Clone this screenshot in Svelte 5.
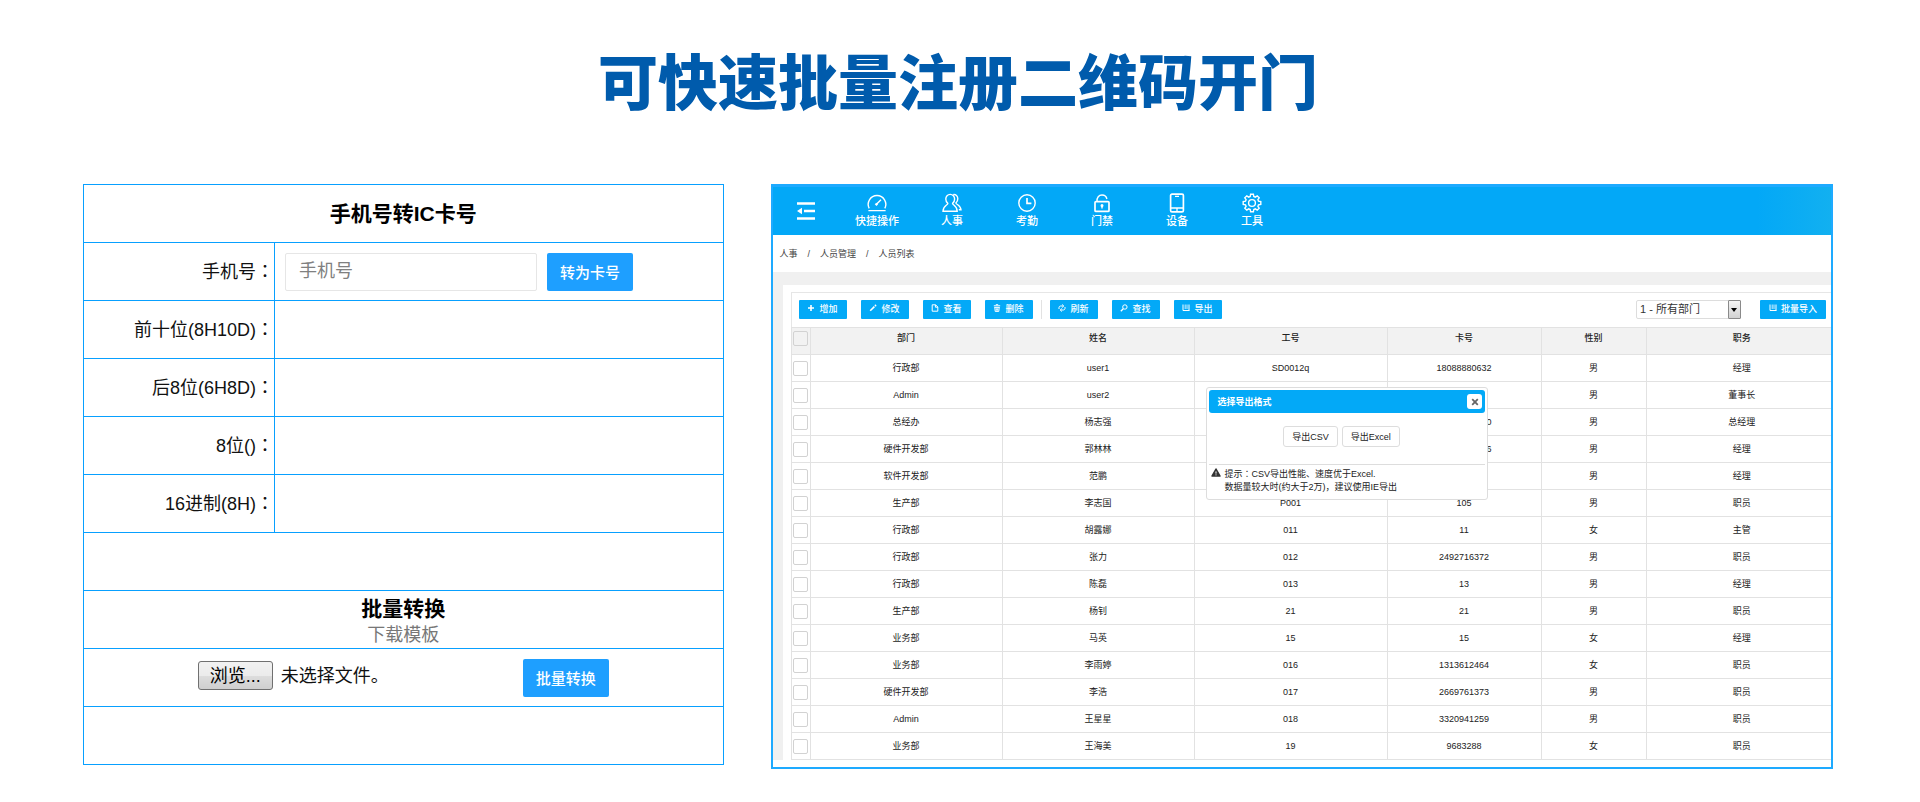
<script>
  const fields = [
    { label: '前十位(8H10D)', id: 'out-10d' },
    { label: '后8位(6H8D)', id: 'out-8d' },
    { label: '8位()', id: 'out-8' },
    { label: '16进制(8H)', id: 'out-hex' }
  ];
  const nav = [
    { name: '快捷操作', icon: 'gauge' },
    { name: '人事', icon: 'people' },
    { name: '考勤', icon: 'clock' },
    { name: '门禁', icon: 'lock' },
    { name: '设备', icon: 'device' },
    { name: '工具', icon: 'gear' }
  ];
  const edit = [
    { name: '增加', icon: 'plus' },
    { name: '修改', icon: 'pencil' },
    { name: '查看', icon: 'page' },
    { name: '删除', icon: 'trash' }
  ];
  const tools = [
    { name: '刷新', icon: 'refresh' },
    { name: '查找', icon: 'search' },
    { name: '导出', icon: 'book' }
  ];
  const columns = ['部门', '姓名', '工号', '卡号', '性别', '职务'];
  const rows = [
    ['行政部', 'user1', 'SD0012q', '18088880632', '男', '经理'],
    ['Admin', 'user2', '', '', '男', '董事长'],
    ['总经办', '杨志强', '', '18088880630', '男', '总经理'],
    ['硬件开发部', '郭林林', '', '18088880636', '男', '经理'],
    ['软件开发部', '范鹏', '', '', '男', '经理'],
    ['生产部', '李志国', 'P001', '105', '男', '职员'],
    ['行政部', '胡露娜', '011', '11', '女', '主管'],
    ['行政部', '张力', '012', '2492716372', '男', '职员'],
    ['行政部', '陈磊', '013', '13', '男', '经理'],
    ['生产部', '杨钊', '21', '21', '男', '职员'],
    ['业务部', '马英', '15', '15', '女', '经理'],
    ['业务部', '李雨婷', '016', '1313612464', '女', '职员'],
    ['硬件开发部', '李浩', '017', '2669761373', '男', '职员'],
    ['Admin', '王星星', '018', '3320941259', '男', '职员'],
    ['业务部', '王海美', '19', '9683288', '女', '职员']
  ];
  let picker;
</script>

{#snippet small(icon)}
  <svg class="mini" viewBox="0 0 8 8" aria-hidden="true">
    {#if icon === 'plus'}
      <path d="M4 1v6M1 4h6" stroke-width="1.6" />
    {:else if icon === 'pencil'}
      <path d="M1.2 6.8 5.4 2.6" stroke-width="1.6" /><path d="M6 2 7 1" stroke-width="1.8" />
    {:else if icon === 'page'}
      <path d="M1.2.8h3.4L6.8 3v4.2H1.2zM4.4.8v2.4h2.4" />
    {:else if icon === 'trash'}
      <path d="M.8 1.8h6.4M2.8.7h2.4M1.4 3.4h5.2M1.8 3.2l.4 4.2h3.6l.4-4.2M3.3 4.3v2.4M4.7 4.3v2.4" />
    {:else if icon === 'refresh'}
      <path d="M1 5V3.6C1 2.6 1.8 2 2.6 2h2.6M4.2.5 5.8 2 4.2 3.5M7 3v1.4C7 5.4 6.2 6 5.4 6H2.8M3.8 4.5 2.2 6l1.6 1.5" />
    {:else if icon === 'search'}
      <circle cx="4.9" cy="3" r="2.2" /><path d="M3.3 4.7.8 7.2" stroke-width="1.3" />
    {:else}
      <path d="M1 .5v6h6.500M7 .5v6" /><path d="M3.200 .5v4.500M5 .5v4.500" stroke-width=".8" />
    {/if}
  </svg>
{/snippet}

{#snippet large(icon)}
  <svg class="glyph" viewBox="0 0 20 20" aria-hidden="true">
    {#if icon === 'gauge'}
      <path d="M1.400 17.600h17.200M2.200 15.400A8.800 8.800 0 1 1 17.800 15.400M9.200 11.600l4.800-4.800" /><path d="M8.600 12.200l1.600-1.600" stroke-width="2.400" />
    {:else if icon === 'people'}
      <path d="M8.2 1.4c-2.6 0-4.4 1.9-4.4 4.6 0 1.9.8 3.4 2 4.4 0 1.700-4.600 2-4.800 7.800h14.200c-.2-5.800-4.600-6.100-4.600-7.800 1.200-1 2-2.500 2-4.400 0-2.700-1.800-4.600-4.400-4.600z" />
      <path d="M11.2 1.6c2.700-.4 4.600 1.500 4.600 4.200 0 1.800-.8 3.200-1.900 4.200.2 1.600 4.800 2 5.100 6.800h-2.200" />
    {:else if icon === 'clock'}
      <circle cx="10" cy="10" r="8.2" /><path d="M10 5v5.400h4.400" stroke-width="1.700" />
    {:else if icon === 'lock'}
      <rect x="3" y="8.600" width="14" height="9.800" rx="1" stroke-width="1.700" /><path d="M5 8.400C4.800 4.400 6.800 2 10 2c2.600 0 4.400 1.500 4.900 4M10 12v3.600" /><circle cx="10" cy="12.400" r=".8" />
    {:else if icon === 'device'}
      <rect x="3.600" y="1.200" width="12.800" height="17.600" rx="1.400" stroke-width="1.700" /><path d="M3.600 15h12.800M8 3.400h4M10 15v3.400" stroke-width="1.300" />
    {:else}
      <circle cx="10" cy="10" r="3.4" />
      <path d="M8.6 1.2h2.8l.4 2.3 1.5.6 1.9-1.3 2 2-1.3 1.9.6 1.5 2.3.4v2.8l-2.3.4-.6 1.5 1.3 1.9-2 2-1.9-1.3-1.5.6-.4 2.3H8.6l-.4-2.3-1.5-.6-1.9 1.3-2-2 1.3-1.9-.6-1.5-2.3-.4V8.600l2.300-.4.6-1.500-1.300-1.900 2-2 1.900 1.300 1.500-.6z" />
    {/if}
  </svg>
{/snippet}

<main>
  <h1>可快速批量注册二维码开门</h1>

  <div class="panels">
    <table class="convert">
      <colgroup><col class="c-label" /><col /></colgroup>
      <tbody>
        <tr><th colspan="2">手机号转IC卡号</th></tr>
        <tr>
          <td class="name"><label for="phone">手机号<span class="colon">：</span></label></td>
          <td class="entry">
            <div class="line">
              <input id="phone" class="phone" type="text" placeholder="手机号" />
              <button class="primary" type="button">转为卡号</button>
            </div>
          </td>
        </tr>
        {#each fields as f}
          <tr>
            <td class="name">{f.label}<span class="colon">：</span></td>
            <td><output id={f.id}></output></td>
          </tr>
        {/each}
        <tr><td colspan="2"></td></tr>
        <tr>
          <td colspan="2" class="batch">
            <strong>批量转换</strong>
            <a href="#template">下载模板</a>
          </td>
        </tr>
        <tr>
          <td colspan="2">
            <div class="upload">
              <div class="file">
                <button class="browse" type="button" onclick={() => picker.click()}>浏览...</button>
                <span>未选择文件。</span>
                <input bind:this={picker} type="file" hidden aria-label="浏览" />
              </div>
              <button class="primary" type="button">批量转换</button>
            </div>
          </td>
        </tr>
        <tr><td colspan="2"></td></tr>
      </tbody>
    </table>

    <section class="app">
      <header>
        <button class="fold" type="button" aria-label="菜单">
          <svg viewBox="0 0 18 18" aria-hidden="true">
            <path d="M0 1.500h18M7 9h11M0 16.500h18" stroke-width="2.400" />
            <path d="M0 9l5-3.200v6.400z" class="solid" />
          </svg>
        </button>
        <nav>
          {#each nav as n}
            <a href="#{n.icon}">{@render large(n.icon)}<span>{n.name}</span></a>
          {/each}
        </nav>
      </header>

      <div class="crumbs"><span>人事</span><i>/</i><span>人员管理</span><i>/</i><span>人员列表</span></div>

      <div class="body">
        <div class="card">
          <div class="toolbar">
            <div class="group">
              {#each edit as b}
                <button class="tool" type="button">{@render small(b.icon)}{b.name}</button>
              {/each}
            </div>
            <div class="group second">
              {#each tools as b}
                <button class="tool" type="button">{@render small(b.icon)}{b.name}</button>
              {/each}
            </div>
            <div class="select">
              <select aria-label="部门"><option>1 - 所有部门</option></select>
              <span class="drop"></span>
            </div>
            <button class="tool wide" type="button">{@render small('book')}批量导入</button>
          </div>

          <table class="list">
            <colgroup>
              <col style:width="19px" /><col style:width="192px" /><col style:width="192px" />
              <col style:width="193px" /><col style:width="154px" /><col style:width="105px" /><col style:width="185px" />
            </colgroup>
            <thead>
              <tr>
                <th class="tick"><input type="checkbox" aria-label="全选" /></th>
                {#each columns as c}<th>{c}</th>{/each}
              </tr>
            </thead>
            <tbody>
              {#each rows as r}
                <tr>
                  <td class="tick"><input type="checkbox" aria-label={r[1]} /></td>
                  {#each r as cell}<td>{cell}</td>{/each}
                </tr>
              {/each}
            </tbody>
          </table>
        </div>
      </div>

      <div class="dialog" role="dialog" aria-label="选择导出格式">
        <div class="bar">
          <strong>选择导出格式</strong>
          <button type="button" aria-label="关闭">
            <svg viewBox="0 0 8 8" aria-hidden="true"><path d="M1.200 1.200l5.600 5.600M6.800 1.200 1.200 6.800" stroke-width="1.800" /></svg>
          </button>
        </div>
        <div class="choices">
          <button type="button">导出CSV</button>
          <button type="button">导出Excel</button>
        </div>
        <div class="tip">
          <svg viewBox="0 0 10 9" aria-hidden="true">
            <path class="edge" d="M5 1 9 8H1z" /><path class="mark" d="M5 3.400v2.200M5 6.400v1" />
          </svg>
          <p>提示<span class="colon">：</span>CSV导出性能、速度优于Excel.<br />数据量较大时(约大于2万)，建议使用IE导出</p>
        </div>
      </div>
    </section>
  </div>
</main>

<style>
  :global(body) {
    margin: 0;
    background: #fff;
  }
  main,
  button,
  input,
  select {
    font-family: "Liberation Sans", "Noto Sans CJK SC", sans-serif;
  }
  main {
    color: #222;
    padding-bottom: 32px;
  }
  h1 {
    margin: 0;
    padding: 35px 4px 0 0;
    height: 149px;
    line-height: 88px;
    text-align: center;
    font-family: "Noto Sans CJK SC", sans-serif;
    font-size: 60px;
    font-weight: 900;
    color: #005bac;
  }
  .panels {
    display: grid;
    grid-template-columns: 642fr 1061fr;
    gap: 47px;
    align-items: start;
    padding: 0 87px 0 83px;
  }
  .colon {
    font-family: "Noto Sans CJK TC", sans-serif;
    line-height: 0;
  }
  svg {
    fill: none;
    stroke: currentColor;
  }
  table {
    width: 100%;
    table-layout: fixed;
    border-collapse: collapse;
  }
  button,
  select,
  input {
    cursor: pointer;
  }

  /* converter */
  .c-label {
    width: 191px;
  }
  .convert tr {
    height: 58px;
  }
  .convert th,
  .convert td {
    padding: 0;
    border: 1px solid #08a0ff;
    font-size: 18px;
    line-height: 24px;
    color: #111;
  }
  .convert th,
  .batch strong {
    font-size: 21px;
    font-weight: 700;
    color: #000;
  }
  .convert .name {
    text-align: right;
  }
  .line {
    display: flex;
    gap: 10px;
    padding-left: 10px;
  }
  .phone {
    box-sizing: border-box;
    width: 252px;
    height: 38px;
    padding: 0 13px;
    border: 1px solid #e6e6e6;
    border-radius: 2px;
    font-size: 18px;
    cursor: text;
  }
  .phone::placeholder {
    color: #808080;
  }
  .primary {
    width: 86px;
    height: 38px;
    padding: 0;
    border: 0;
    border-radius: 2px;
    background: #1e9fff;
    color: #fff;
    font-size: 15px;
    font-weight: 500;
  }
  .convert .batch {
    padding-top: 4px;
    text-align: center;
  }
  .batch strong,
  .batch a {
    display: block;
    line-height: 26px;
  }
  .batch a {
    color: #777;
    text-decoration: none;
  }
  .upload {
    display: flex;
    justify-content: center;
    align-items: center;
    gap: 134px;
  }
  .file {
    display: flex;
    align-items: center;
    gap: 8px;
    padding-bottom: 4px;
  }
  .browse {
    height: 29px;
    width: 75px;
    padding: 0;
    border: 1px solid #707070;
    border-radius: 3px;
    background: linear-gradient(#f2f2f2 0%, #ebebeb 50%, #dddddd 51%, #cfcfcf 100%);
    font-size: 18px;
    line-height: 24px;
    color: #000;
  }

  /* management window */
  .app {
    position: relative;
    border: 2px solid #1eaaff;
    border-top-width: 3px;
    font-size: 9px;
    color: #222;
  }
  header {
    display: flex;
    align-items: center;
    height: 48px;
    padding-left: 24px;
    background: linear-gradient(90deg, #03a8f7 93%, #12b0f0 100%);
    color: #fff;
  }
  .fold {
    display: flex;
    padding: 0;
    border: 0;
    background: none;
    color: #fff;
  }
  .fold svg {
    width: 18px;
    height: 18px;
  }
  .solid {
    fill: currentColor;
    stroke: none;
  }
  nav {
    display: flex;
    padding-left: 25px;
  }
  nav a {
    display: flex;
    flex-direction: column;
    align-items: center;
    width: 75px;
    font-size: 11px;
    font-weight: 500;
    line-height: 16px;
    color: #fff;
    text-decoration: none;
  }
  .glyph {
    width: 20px;
    height: 20px;
    stroke-width: 1.4;
  }
  .crumbs {
    display: flex;
    gap: 10px;
    align-items: center;
    height: 37px;
    padding-left: 7px;
    color: #444;
  }
  .crumbs i {
    font-style: normal;
  }
  .body {
    margin-bottom: 7px;
    padding: 13px 0 0 10px;
    background: #f0f0f0;
  }
  .card {
    padding: 7px 0 0 8px;
    background: #fff;
  }
  .toolbar {
    display: flex;
    align-items: center;
    height: 32px;
    padding: 0 5px 2px 7px;
    border-top: 1px solid #e6e6e6;
    border-left: 1px solid #e6e6e6;
  }
  .group {
    display: flex;
    gap: 14px;
  }
  .second {
    margin-left: 8px;
    padding-left: 8px;
    border-left: 1px solid #e2e2e2;
  }
  .tool {
    display: flex;
    align-items: center;
    justify-content: center;
    gap: 4px;
    width: 48px;
    height: 19px;
    padding: 0;
    border: 0;
    border-radius: 1px;
    background: #03a9f7;
    color: #fff;
    font-size: 9px;
    font-weight: 500;
    line-height: 18px;
  }
  .mini {
    width: 8px;
    height: 8px;
    padding-bottom: 2px;
  }
  .wide {
    width: 66px;
  }
  .select {
    position: relative;
    margin: 0 19px 0 auto;
  }
  select {
    display: block;
    box-sizing: border-box;
    width: 105px;
    height: 19px;
    padding: 0 3px;
    border: 1px solid #ddd;
    border-radius: 2px;
    background: #fff;
    appearance: none;
    font-size: 11px;
    color: #333;
  }
  .drop {
    position: absolute;
    top: 0;
    right: 0;
    box-sizing: border-box;
    width: 13px;
    height: 19px;
    border: 1px solid #8a8a8a;
    border-radius: 1px;
    background: linear-gradient(#f4f4f4, #d2d2d2);
    pointer-events: none;
  }
  .drop::after {
    content: "";
    position: absolute;
    top: 7px;
    left: 2px;
    border: solid transparent;
    border-width: 4px 3px 0;
    border-top-color: #000;
  }
  .list tr {
    height: 27px;
  }
  .list th,
  .list td {
    padding: 0;
    border: 1px solid #e2e2e2;
    text-align: center;
    line-height: 14px;
  }
  .list th:last-child,
  .list td:last-child {
    padding-left: 6px;
    border-right: 0;
  }
  .list th {
    padding-bottom: 6px;
    background: #f2f2f2;
    font-weight: 500;
    color: #222;
  }
  .list input {
    display: block;
    box-sizing: border-box;
    width: 15px;
    height: 15px;
    margin: 0 auto;
    border: 1px solid #d2d2d2;
    border-radius: 2px;
    appearance: none;
  }
  .dialog {
    position: absolute;
    top: 200px;
    left: 41%;
    box-sizing: border-box;
    width: 282px;
    padding: 2px;
    border: 1px solid #ddd;
    border-radius: 3px;
    background: #fff;
    color: #222;
  }
  .bar {
    display: flex;
    align-items: center;
    justify-content: space-between;
    height: 23px;
    padding: 0 3px 0 8px;
    border-radius: 3px;
    background: #03a9f7;
    color: #fff;
  }
  .bar button {
    display: flex;
    align-items: center;
    justify-content: center;
    width: 15px;
    height: 15px;
    padding: 0;
    border: 0;
    border-radius: 3px;
    background: #fff;
    color: #666;
  }
  .bar svg {
    width: 8px;
    height: 8px;
  }
  .choices {
    display: flex;
    justify-content: center;
    gap: 4px;
    padding: 13px 12px 17px 0;
  }
  .choices button {
    height: 21px;
    padding: 0 8px;
    border: 1px solid #ddd;
    border-radius: 3px;
    background: #fff;
    color: #222;
    font-size: 9px;
  }
  .tip {
    display: flex;
    gap: 3px;
    padding: 3px 2px;
    border-top: 1px solid #ddd;
  }
  .tip svg {
    width: 10px;
    height: 9px;
  }
  .edge {
    fill: #333;
    stroke: #333;
    stroke-width: 1.5;
    stroke-linejoin: round;
  }
  .mark {
    stroke: #fff;
  }
  .tip p {
    margin: 0;
    line-height: 13px;
  }
</style>
